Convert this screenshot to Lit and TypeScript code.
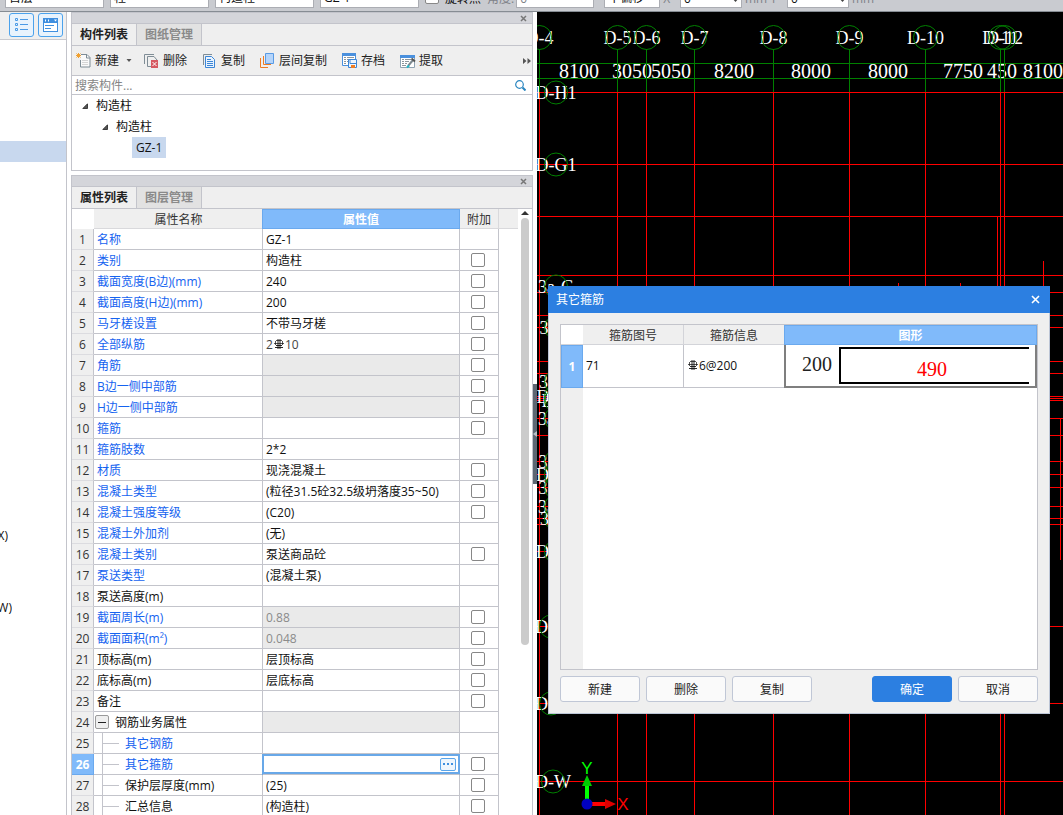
import { LitElement, html, svg, css, nothing } from "lit";
import { customElement } from "lit/decorators.js";
import { classMap } from "lit/directives/class-map.js";

interface Prop {
  name: string;
  value?: string;
  black?: boolean;
  noCheck?: boolean;
  disabled?: boolean;
  level?: "group" | "child";
  rebar?: boolean;
  active?: boolean;
}

const PROPS: Prop[] = [
  { name: "名称", value: "GZ-1", noCheck: true },
  { name: "类别", value: "构造柱" },
  { name: "截面宽度(B边)(mm)", value: "240" },
  { name: "截面高度(H边)(mm)", value: "200" },
  { name: "马牙槎设置", value: "不带马牙槎" },
  { name: "全部纵筋", rebar: true },
  { name: "角筋", disabled: true },
  { name: "B边一侧中部筋", disabled: true },
  { name: "H边一侧中部筋", disabled: true },
  { name: "箍筋" },
  { name: "箍筋肢数", value: "2*2", noCheck: true },
  { name: "材质", value: "现浇混凝土" },
  { name: "混凝土类型", value: "(粒径31.5砼32.5级坍落度35~50)" },
  { name: "混凝土强度等级", value: "(C20)" },
  { name: "混凝土外加剂", value: "(无)", noCheck: true },
  { name: "混凝土类别", value: "泵送商品砼" },
  { name: "泵送类型", value: "(混凝土泵)", noCheck: true },
  { name: "泵送高度(m)", black: true, noCheck: true },
  { name: "截面周长(m)", value: "0.88", disabled: true },
  { name: "截面面积(m²)", value: "0.048", disabled: true },
  { name: "顶标高(m)", value: "层顶标高", black: true },
  { name: "底标高(m)", value: "层底标高", black: true },
  { name: "备注", black: true },
  { name: "钢筋业务属性", black: true, noCheck: true, disabled: true, level: "group" },
  { name: "其它钢筋", noCheck: true, level: "child" },
  { name: "其它箍筋", level: "child", active: true },
  { name: "保护层厚度(mm)", value: "(25)", black: true, level: "child" },
  { name: "汇总信息", value: "(构造柱)", black: true, level: "child" },
];

const base = css`
  * {
    box-sizing: border-box;
  }
  :host {
    font: 12px/16px "Open Sans", "Noto Sans", "Noto Sans CJK SC", sans-serif;
    color: #111;
  }
  button,
  input,
  select {
    font: inherit;
    color: inherit;
    margin: 0;
    padding: 0;
    border: 0;
    background: none;
    border-radius: 0;
    outline: 0;
  }
  svg {
    display: block;
    flex: none;
  }
  .rebar {
    margin: 0 1px 3px;
  }
  table {
    border-collapse: separate;
    border-spacing: 0;
    table-layout: fixed;
  }
  th,
  td {
    padding: 0;
    font-weight: normal;
    white-space: nowrap;
    overflow: hidden;
  }
`;

const rebarMark = html`<svg class="rebar" width="10" height="10" viewBox="0 0 10 10" fill="none" stroke="#111">
  <path d="M2 1.500h6M1.500 2v4M8.500 2v4M0 4.500h10" stroke-width=".7" />
  <path d="M2 6.500h6M1 8.500h8" stroke-width=".9" />
  <path d="M4 0v10M6 0v10" stroke-width=".9" />
</svg>`;

@customElement("option-bar")
class OptionBar extends LitElement {
  static styles = [
    base,
    css`
      :host {
        display: flex;
        align-items: flex-end;
        gap: 6px;
        height: 12px;
        padding: 0 5px 3px;
        background: #c9cbd0;
        border-bottom: 1px solid #868c93;
        overflow: hidden;
        flex: none;
        white-space: nowrap;
      }
      select,
      .num {
        height: 22px;
        background: #fff;
        border: 1px solid #abadb3;
        padding: 2px 3px 0;
        appearance: none;
        flex: none;
      }
      .wide {
        width: 99px;
      }
      .angle {
        width: 78px;
        margin-right: 4px;
      }
      .offset {
        width: 56px;
      }
      .spin {
        position: relative;
        flex: none;
      }
      .spin .num {
        width: 62px;
        display: block;
      }
      .spin svg {
        position: absolute;
        right: 3px;
        bottom: 6px;
      }
      .tick {
        display: flex;
        align-items: flex-end;
        gap: 6px;
        height: 22px;
        line-height: 18px;
      }
      .tick input {
        appearance: none;
        width: 14px;
        height: 14px;
        margin-bottom: 4px;
        border: 1px solid #888;
        border-radius: 2px;
        background: #fff;
      }
      .dim {
        color: #7f8288;
        height: 22px;
        line-height: 18px;
        display: flex;
        align-items: flex-end;
        gap: 2px;
      }
      .unit {
        margin: 0 -3px;
      }
    `,
  ];
  spinner(label: string) {
    return html`<span class="spin"
      ><input class="num" aria-label=${label} value="0" /><svg width="7" height="4" viewBox="0 0 7 4">
        <path d="M0 0h7L3.500 4z" fill="#444" /></svg
    ></span>`;
  }
  render() {
    return html`
      ${["首层", "柱", "构造柱", "GZ-1"].map(
        (t) => html`<select class="wide" aria-label=${t}><option>${t}</option></select>`
      )}
      <label class="tick"><input type="checkbox" />旋转点</label>
      <label class="dim">角度:<input class="num angle" value="0" /></label>
      <select class="offset" aria-label="偏移"><option>不偏移</option></select>
      <span class="dim unit">X=</span>${this.spinner("X")}<span class="dim unit">mm Y=</span>${this.spinner("Y")}<span
        class="dim unit"
        >mm</span
      >
    `;
  }
}

@customElement("module-nav")
class ModuleNav extends LitElement {
  static styles = [
    base,
    css`
      :host {
        display: flex;
        flex-direction: column;
        width: 67px;
        flex: none;
        border-right: 1px solid #c3c4cb;
        background: #fff;
        overflow: hidden;
      }
      .bar {
        display: flex;
        gap: 4px;
        height: 28px;
        padding: 1px 0 0 9px;
        background: #efefef;
        border-bottom: 1px solid #c9cacf;
        flex: none;
      }
      .bar button {
        width: 25px;
        height: 24px;
        border: 1px solid #4ba2ec;
        border-radius: 3px;
        background: #e8f3fd;
        display: grid;
        place-items: center;
      }
      ul {
        list-style: none;
        margin: 0;
        padding: 5px 0 0;
      }
      li {
        height: 21px;
        margin-bottom: 3px;
        line-height: 21px;
      }
      li.on {
        background: #c8d8ee;
      }
      li span {
        display: flex;
        justify-content: flex-end;
        width: 12px;
        height: 21px;
        overflow: hidden;
      }
      li .short {
        width: 8px;
      }
    `,
  ];
  render() {
    const rows = Array.from({ length: 24 }, (_, i) => i);
    return html`
      <div class="bar">
        <button aria-label="列表">
          <svg width="14" height="14" viewBox="0 0 14 14" fill="none" stroke="#4b9ae6">
            <path d="M.5.5h2v2h-2zM.5 5.500h2v2h-2zM.5 10.500h2v2h-2z" />
            <path d="M5 1.500h8M5 6.500h8M5 11.500h8" />
          </svg>
        </button>
        <button aria-label="视图">
          <svg width="15" height="14" viewBox="0 0 15 14">
            <path d="M0 0h15v14H0z" fill="#3f8fe0" />
            <path d="M1 5h13v8H1z" fill="#fff" />
            <path d="M2 1.500h1v2H2zM5 1.500h1v2H5zM11 1.500h3l-1.500 2z" fill="#fff" />
            <path d="M2 7.500h9M2 10.500h6" stroke="#3f8fe0" />
          </svg>
        </button>
      </div>
      <ul>
        ${rows.map(
          (i) => html`<li class=${classMap({ on: i === 4 })}>
            ${i === 20 ? html`<span class="short">(X)</span>` : i === 23 ? html`<span>(W)</span>` : nothing}
          </li>`
        )}
      </ul>
    `;
  }
}

const dock = css`
  :host {
    display: flex;
    flex-direction: column;
    border: 1px solid #c3c4cb;
    background: #fff;
  }
  .title {
    display: flex;
    justify-content: flex-end;
    align-items: center;
    height: 11px;
    padding-right: 5px;
    background: #d4d5da;
    border-bottom: 1px solid #c3c4cb;
    flex: none;
  }
  .title button {
    width: 7px;
    height: 7px;
  }
  .tabs {
    display: flex;
    height: 22px;
    background: #efefef;
    border-bottom: 1px solid #c3c4cb;
    flex: none;
  }
  .tabs button {
    width: 65px;
    font-weight: bold;
    color: #8a8a8a;
    background: #e2e2e2;
    border-right: 1px solid #c3c4cb;
  }
  .tabs .on {
    color: #222;
    background: #efefef;
  }
`;

const dockHead = (a: string, b: string) => html`
  <div class="title">
    <button aria-label="关闭">
      <svg width="7" height="7" viewBox="0 0 7 7"><path d="M1 1l5 5M6 1L1 6" stroke="#777" stroke-width="1.500" /></svg>
    </button>
  </div>
  <div class="tabs"><button class="on">${a}</button><button>${b}</button></div>
`;

const ICONS = {
  create: svg`<path d="M5 1.500h6l3 3v9.500H4.500V7" fill="#fafafa" stroke="#7f8d96"/><path d="M10.500 1.500v3.500h3.500" fill="none" stroke="#7f8d96"/><path d="M6 7.500h6M6 9.500h6M6 11.500h6" stroke="#d5d5d5"/><path d="M.5.5l4 4M4.500.5l-4 4M2.500 0v5M0 2.500h5" stroke="#f0a030"/>`,
  remove: svg`<path d="M.5 11V1.500H10" fill="none" stroke="#7f8d96"/><path d="M7 13.500H3.500v-10H10l3 3.500" fill="none" stroke="#7f8d96"/><path d="M7 7h7v8H7z" fill="#d65a62"/><path d="M8.500 9l4 4M12.500 9l-4 4" stroke="#fff"/>`,
  copy: svg`<path d="M1.500 12V1.500H10" fill="none" stroke="#7f8d96"/><path d="M3.500 3.500h6l3 3v8h-9z" fill="#eaf4ff" stroke="#3c86d6"/><path d="M5 6.500h4M5 8.500h6M5 10.500h6M5 12.500h6" stroke="#3c86d6"/>`,
  layer: svg`<path d="M.5 5v9.500H8M3.500 3v8.500H11" fill="none" stroke="#ee7d24"/><path d="M5.500.5h8v10h-8z" fill="#b5d5fb" stroke="#5a9be4"/>`,
  save: svg`<path d="M.5.5h13v12H.5z" fill="#fff" stroke="#4a90dd"/><path d="M0 0h14v3H0z" fill="#4a90dd"/><path d="M2 4.500h2M5 4.500h7M2 6.500h2M5 6.500h2M2 8.500h2M5 8.500h2M2 10.500h2" stroke="#8b959c"/><path d="M6.500 6.500h8v8h-8z" fill="#eef6ff" stroke="#3c86d6"/><path d="M8 6.500v4h6" fill="none" stroke="#3c86d6"/><path d="M9 12h4v3H9z" fill="#ee7d24"/>`,
  extract: svg`<path d="M.5 2.500h14v12H.5z" fill="#fff" stroke="#8fa3b3"/><path d="M0 2h15v3H0z" fill="#4a90dd"/><path d="M2 6.500h2M5 6.500h6M2 8.500h2M5 8.500h4M2 10.500h2M5 10.500h2M2 12.500h4" stroke="#8b959c"/><path d="M8 13l5-6" stroke="#7c8991" stroke-width="2"/><path d="M11.500 5.500l3.500 3" stroke="#555" stroke-width="2"/><path d="M7 14.500l2-2" stroke="#20b7c8" stroke-width="2"/>`,
};

@customElement("component-panel")
class ComponentPanel extends LitElement {
  static styles = [
    base,
    dock,
    css`
      .tools {
        display: flex;
        gap: 12px;
        align-items: center;
        height: 30px;
        padding-left: 4px;
        background: #efefef;
        border-bottom: 1px solid #c3c4cb;
      }
      .tools button {
        display: flex;
        align-items: center;
        gap: 3px;
        padding-right: 3px;
        flex: none;
        color: #222;
      }
      .tools .drop {
        padding-right: 0;
      }
      .tools .more {
        margin-left: auto;
        padding-right: 1px;
      }
      .search {
        display: flex;
        align-items: center;
        height: 19px;
        padding: 1px 6px 0 3px;
        border-bottom: 1px solid #c3c4cb;
      }
      .search input {
        flex: 1;
      }
      .search input::placeholder {
        color: #858585;
      }
      .tree {
        height: 75px;
      }
      .node {
        display: flex;
        align-items: center;
        gap: 8px;
        height: 21px;
        padding-left: 10px;
        line-height: 21px;
      }
      .second {
        padding-left: 30px;
      }
      .third {
        padding-left: 60px;
      }
      .third span {
        background: #c8d8ee;
        padding: 0 4px;
      }
    `,
  ];
  tool(icon: unknown, label: string, drop = false) {
    return html`<button class=${classMap({ drop })}>
      <svg width="16" height="16" viewBox="0 0 16 16">${icon}</svg>${label}${drop
        ? html`<svg width="10" height="4" viewBox="0 0 10 4"><path d="M4.500 0h5L7 3z" fill="#555" /></svg>`
        : nothing}
    </button>`;
  }
  render() {
    const open = html`<svg width="6" height="6" viewBox="0 0 6 6"><path d="M5.500.8v4.700H.8z" fill="#555" stroke="#222" stroke-width=".8" /></svg>`;
    return html`
      ${dockHead("构件列表", "图纸管理")}
      <div class="tools">
        ${this.tool(ICONS.create, "新建", true)} ${this.tool(ICONS.remove, "删除")} ${this.tool(ICONS.copy, "复制")}
        ${this.tool(ICONS.layer, "层间复制")} ${this.tool(ICONS.save, "存档")} ${this.tool(ICONS.extract, "提取")}
        <button class="more" aria-label="更多">
          <svg width="8" height="6" viewBox="0 0 8 6"><path d="M0 0l3.500 3L0 6zM4.500 0L8 3 4.500 6z" fill="#555" /></svg>
        </button>
      </div>
      <label class="search">
        <input type="text" aria-label="搜索构件" placeholder="搜索构件..." />
        <svg width="11" height="11" viewBox="0 0 11 11" fill="none" stroke="#2a86c0">
          <circle cx="4.500" cy="4.500" r="3.800" stroke-width="1.200" />
          <path d="M7.500 7.500l3 3" stroke-width="2" />
        </svg>
      </label>
      <div class="tree">
        <div class="node">${open}构造柱</div>
        <div class="node second">${open}构造柱</div>
        <div class="node third"><span>GZ-1</span></div>
      </div>
    `;
  }
}

@customElement("property-panel")
class PropertyPanel extends LitElement {
  static styles = [
    base,
    dock,
    css`
      :host {
        overflow: hidden;
        border-bottom: 0;
      }
      .body {
        display: flex;
        flex: 1;
        min-height: 0;
        overflow: hidden;
      }
      table {
        flex: 1;
        height: max-content;
      }
      .c-num {
        width: 22px;
      }
      .c-name {
        width: 169px;
      }
      .c-add {
        width: 39px;
      }
      .c-rest {
        width: 19px;
      }
      thead th {
        height: 20px;
        padding-top: 2px;
        background: #efefef;
        color: #333;
        border-bottom: 1px solid #d9d9dc;
      }
      thead .corner {
        background: #fff;
        border: 0;
      }
      thead .val {
        padding-top: 1px;
        background: #80bafa;
        border: 1px solid #6aa9ee;
        border-left: 0;
        box-shadow: -1px 0 #6aa9ee;
        color: #fff;
        font-weight: bold;
      }
      thead .add {
        border-right: 1px solid #d9d9dc;
      }
      tbody th,
      td {
        height: 21px;
        line-height: 18px;
        padding-top: 2px;
        border-bottom: 1px solid #c3c4cb;
        border-right: 1px solid #c3c4cb;
      }
      tbody th {
        background: #efefef;
        color: #333;
        border-bottom-color: #dcdce0;
      }
      td {
        padding-left: 3px;
      }
      td.rest {
        border: 0;
      }
      .name {
        color: #1563f0;
      }
      .name.black {
        color: #111;
      }
      .off {
        background: #eaeaea;
        color: #8b8b8b;
      }
      td.tick {
        padding: 0 2px 0 0;
      }
      .tick input {
        display: block;
        appearance: none;
        width: 14px;
        height: 14px;
        margin: 0 auto;
        border: 1px solid #878787;
        border-radius: 2px;
        background: #fff;
      }
      .rebars {
        display: flex;
        align-items: center;
        height: 16px;
        color: #444;
      }
      td.group,
      td.child {
        padding-top: 0;
      }
      .row {
        display: flex;
        align-items: center;
        height: 20px;
      }
      .row span {
        padding-top: 2px;
      }
      .fold {
        width: 14px;
        height: 14px;
        border: 1px solid #9a9a9a;
        border-radius: 2px;
        background: #efefef;
        display: grid;
        place-items: center;
        margin-right: 6px;
      }
      td.group {
        padding-left: 1px;
      }
      td.child {
        padding-left: 8px;
      }
      .branch {
        width: 17px;
        height: 20px;
        margin-right: 6px;
      }
      tbody .hot th {
        background: #80bafa;
        color: #fff;
        font-weight: bold;
        border-color: #6aa9ee;
      }
      td.edit {
        padding: 0;
        box-shadow: -1px 0 #68a8e8;
        border-right-color: #68a8e8;
      }
      .editor {
        display: flex;
        align-items: center;
        height: 20px;
        border: 2px solid #68a8e8;
        border-width: 2px 1px;
        padding-right: 2px;
      }
      .editor input {
        flex: 1;
        min-width: 0;
        height: 16px;
      }
      .editor button {
        width: 16px;
        height: 13px;
        border: 1px solid #5aa5ea;
        border-radius: 2px;
        background: #eef6fd;
        display: grid;
        place-items: center;
      }
      .gutter {
        width: 14px;
        flex: none;
        display: flex;
        flex-direction: column;
        padding: 2px 0 0 3px;
        gap: 3px;
      }
      .thumb {
        width: 8px;
        height: 427px;
        border-radius: 4px;
        background: #cbcbcb;
      }
    `,
  ];
  nameCell(p: Prop) {
    if (p.level === "group")
      return html`<div class="row">
        <button class="fold" aria-label="折叠"><svg width="8" height="1"><path d="M0 0h8v1H0z" fill="#222" /></svg></button
        ><span>${p.name}</span>
      </div>`;
    if (p.level === "child")
      return html`<div class="row">
        <svg class="branch" viewBox="0 0 17 20"><path d="M.5 0v20M.5 10.500H17" fill="none" stroke="#c3c4cb" /></svg
        ><span>${p.name}</span>
      </div>`;
    return p.name;
  }
  valueCell(p: Prop) {
    if (p.active)
      return html`<div class="editor">
        <input type="text" aria-label=${p.name} /><button aria-label="编辑">
          <svg width="10" height="2"><path d="M0 0h2v2H0zM4 0h2v2H4zM8 0h2v2H8z" fill="#3d8fdf" /></svg>
        </button>
      </div>`;
    if (p.rebar) return html`<div class="rebars"><span>2</span>${rebarMark}<span>10</span></div>`;
    return p.value ?? nothing;
  }
  render() {
    return html`
      ${dockHead("属性列表", "图层管理")}
      <div class="body">
        <table>
          <colgroup>
            <col class="c-num" /><col class="c-name" /><col /><col class="c-add" /><col class="c-rest" />
          </colgroup>
          <thead>
            <tr><th class="corner"></th><th>属性名称</th><th class="val">属性值</th><th class="add">附加</th><th></th></tr>
          </thead>
          <tbody>
            ${PROPS.map(
              (p, i) => html`<tr class=${classMap({ hot: !!p.active })}>
                <th>${i + 1}</th>
                <td class=${classMap({ name: true, black: !!p.black, group: p.level === "group", child: p.level === "child" })}>
                  ${this.nameCell(p)}
                </td>
                <td class=${classMap({ off: !!p.disabled, edit: !!p.active })}>${this.valueCell(p)}</td>
                <td class="tick">${p.noCheck ? nothing : html`<input type="checkbox" aria-label=${p.name} />`}</td>
                <td class="rest"></td>
              </tr>`
            )}
          </tbody>
        </table>
        <div class="gutter">
          <svg width="8" height="4" viewBox="0 0 8 4"><path d="M4 0l4 4H0z" fill="#333" /></svg>
          <div class="thumb"></div>
        </div>
      </div>
    `;
  }
}

const AXES: [number, string][] = [
  [539.5, "D-4"],
  [617.5, "D-5"],
  [646.5, "D-6"],
  [694.5, "D-7"],
  [773.5, "D-8"],
  [849.5, "D-9"],
  [925.5, "D-10"],
  [1000.5, "D-11"],
  [1004.5, "D-12"],
];
const SPANS: [number, string][] = [
  [579, "8100"],
  [632, "3050"],
  [671, "5050"],
  [734, "8200"],
  [811, "8000"],
  [888, "8000"],
  [963, "7750"],
  [1002, "450"],
  [1043, "8100"],
];
const LEVELS = [92, 164, 216, 275, 292, 315, 327, 361, 373, 396, 398, 400, 418, 435, 461, 474, 487, 506, 518, 524, 626, 703, 781];
const SIDE: [number, number, string][] = [
  [556, 92, "D-H1"],
  [556, 164, "D-G1"],
  [556, 286, "3a-G"],
  [556, 327, "3a-F"],
  [556, 381, "3a-E"],
  [556, 396, "D-E1"],
  [556, 400, "B-E"],
  [556, 418, "3a-D"],
  [556, 461, "3a-C"],
  [556, 474, "D-C1"],
  [556, 487, "3a-B"],
  [556, 506, "3a-A"],
  [556, 518, "3a-1"],
  [556, 551, "D-B1"],
  [551, 626, "D-A"],
  [551, 703, "D-Y"],
  [553, 781, "D-W"],
];

@customElement("cad-view")
class CadView extends LitElement {
  static styles = [
    base,
    css`
      :host {
        display: block;
        flex: 1;
        min-width: 0;
        background: #000;
        overflow: hidden;
        position: relative;
      }
      .plan {
        width: 100%;
        height: 100%;
      }
      .span,
      .tag {
        font-family: "Liberation Serif", serif;
        fill: #fff;
        text-anchor: middle;
      }
      .span {
        font-size: 20px;
      }
      .tag {
        font-size: 18px;
      }
      .axis {
        font: 17px "Liberation Sans", sans-serif;
        text-anchor: middle;
      }
    `,
  ];
  render() {
    return html`<svg class="plan">
        <g transform="translate(-537 -12)" fill="none">
          <g stroke="#f00">
            ${AXES.map(([x]) => svg`<path d="M${x} 92V2000"/>`)}
            ${LEVELS.map((y) => svg`<path d="M537 ${y + 0.5}H4000"/>`)}
            <path d="M537 551.500h12M997.500 217v80M1043.500 261v30M898.500 283v8M960.500 283v8M1060.500 418v142" />
          </g>
          ${AXES.map(([x, t]) => svg`<text class="tag" x=${x} y="44">${t}</text>`)}
          ${SPANS.map(([x, t]) => svg`<text class="span" x=${x} y="78">${t}</text>`)}
          ${SIDE.map(([x, y, t]) => svg`<text class="tag" x=${x} y=${y + 7}>${t}</text>`)}
          <g stroke="#008000">
            <path d="M537 63.500H4000M537 78.500H4000" />
            ${AXES.map(([x]) => svg`<path d="M${x} 49V92"/><circle cx=${x} cy="37.500" r="12"/>`)}
            ${SIDE.map(([x, y]) => svg`<circle cx=${x} cy=${y + 0.5} r="11.500"/>`)}
          </g>
          <path d="M587 804V786" stroke="#0f0" stroke-width="4" />
          <path d="M587 775l5 11h-10z" fill="#0c0" />
          <path d="M587 804h20" stroke="#f00" stroke-width="4" />
          <path d="M616 804l-11 5v-10z" fill="#d00" />
          <circle cx="587" cy="804" r="5.500" fill="#0000c0" />
          <text class="axis" x="587" y="774" fill="#0f0">Y</text>
          <text class="axis" x="623" y="810" fill="#f00">X</text>
        </g>
      </svg>
      <slot></slot>`;
  }
}

@customElement("stirrup-dialog")
class StirrupDialog extends LitElement {
  static styles = [
    base,
    css`
      :host {
        position: absolute;
        left: 11px;
        right: 13px;
        top: 274px;
        height: 428px;
        display: flex;
        flex-direction: column;
        background: #efefef;
        border: 1px solid #bcc5d6;
        border-top: 0;
      }
      header {
        display: flex;
        align-items: center;
        justify-content: space-between;
        height: 27px;
        margin: 0 -1px;
        padding: 0 10px 0 8px;
        background: #2c7fe1;
        color: #fff;
        flex: none;
      }
      .main {
        display: flex;
        flex-direction: column;
        flex: 1;
        gap: 6px;
        padding: 11px;
      }
      .grid {
        flex: 1;
        display: flex;
        align-items: flex-start;
        border: 1px solid #c3c4cb;
        background: linear-gradient(to right, #efefef 22px, #fff 22px);
      }
      table {
        width: 100%;
      }
      .c-num {
        width: 22px;
      }
      .c-no {
        width: 101px;
      }
      .c-info {
        width: 100px;
      }
      thead th {
        height: 20px;
        padding-top: 2px;
        background: #efefef;
        color: #333;
        border-right: 1px solid #d3d4d9;
        border-bottom: 1px solid #d3d4d9;
      }
      thead .corner,
      thead .open {
        border-right: 0;
      }
      thead .corner {
        background: #fff;
      }
      thead .shape {
        padding-top: 1px;
        background: #80bafa;
        border: 1px solid #6aa9ee;
        color: #fff;
        font-weight: bold;
      }
      tbody th {
        background: #80bafa;
        border: 1px solid #6aa9ee;
        color: #fff;
        font-weight: bold;
      }
      td {
        height: 43px;
        background: #fff;
        padding-left: 3px;
        border-right: 1px solid #c3c4cb;
        border-bottom: 1px solid #c3c4cb;
      }
      td.open {
        border-right: 0;
      }
      .info {
        display: flex;
        align-items: center;
      }
      td.figure {
        padding: 0;
        border: 2px solid #7f7f7f;
        border-top: 0;
      }
      .draw {
        display: flex;
        align-items: center;
        height: 41px;
        gap: 7px;
        padding: 0 6px 0 16px;
        font: 20px/24px "Liberation Serif", serif;
        color: #222;
      }
      .draw span {
        padding-bottom: 3px;
      }
      .hoop {
        flex: 1;
        height: 37px;
        border: 2px solid #000;
        border-right: 0;
        color: #f00;
        text-align: center;
        padding: 8px 6px 0 0;
      }
      footer {
        display: flex;
        gap: 6px;
      }
      footer button {
        width: 80px;
        height: 26px;
        padding-top: 2px;
        border: 1px solid #c0c7d6;
        border-radius: 3px;
        background: #fafafa;
        color: #222;
      }
      footer .ok {
        margin-left: auto;
        background: #2c7fe1;
        border-color: #2c7fe1;
        color: #fff;
      }
    `,
  ];
  render() {
    return html`
      <header>
        其它箍筋
        <button aria-label="关闭">
          <svg width="9" height="9" viewBox="0 0 9 9"><path d="M1 1l7 7M8 1L1 8" stroke="#fff" stroke-width="1.600" /></svg>
        </button>
      </header>
      <div class="main">
        <div class="grid">
          <table>
            <colgroup><col class="c-num" /><col class="c-no" /><col class="c-info" /><col /></colgroup>
            <thead>
              <tr><th class="corner"></th><th>箍筋图号</th><th class="open">箍筋信息</th><th class="shape">图形</th></tr>
            </thead>
            <tbody>
              <tr>
                <th>1</th>
                <td>71</td>
                <td class="open"><div class="info">${rebarMark}<span>6@200</span></div></td>
                <td class="figure"><div class="draw"><span>200</span><div class="hoop">490</div></div></td>
              </tr>
            </tbody>
          </table>
        </div>
        <footer>
          <button>新建</button><button>删除</button><button>复制</button><button class="ok">确定</button><button>取消</button>
        </footer>
      </div>
    `;
  }
}

@customElement("app-root")
class AppRoot extends LitElement {
  static styles = [
    base,
    css`
      :host {
        display: flex;
        flex-direction: column;
        height: 100vh;
        overflow: hidden;
        background: #fff;
      }
      .work {
        display: flex;
        flex: 1;
        min-height: 0;
      }
      .docks {
        display: flex;
        flex-direction: column;
        gap: 4px;
        width: 462px;
        margin-left: 4px;
        flex: none;
      }
      property-panel {
        flex: 1;
        min-height: 0;
      }
      .splitter {
        width: 4px;
        flex: none;
        padding-top: 372px;
      }
      .handle {
        display: grid;
        place-items: center;
        width: 4px;
        height: 100px;
        background: #5d6773;
      }
    `,
  ];
  render() {
    return html`
      <option-bar></option-bar>
      <div class="work">
        <module-nav></module-nav>
        <div class="docks">
          <component-panel></component-panel>
          <property-panel></property-panel>
        </div>
        <div class="splitter">
          <button class="handle" aria-label="收起">
            <svg width="4" height="6" viewBox="0 0 4 6"><path d="M4 0v6L0 3z" fill="#b9bfc6" /></svg>
          </button>
        </div>
        <cad-view><stirrup-dialog></stirrup-dialog></cad-view>
      </div>
    `;
  }
}
